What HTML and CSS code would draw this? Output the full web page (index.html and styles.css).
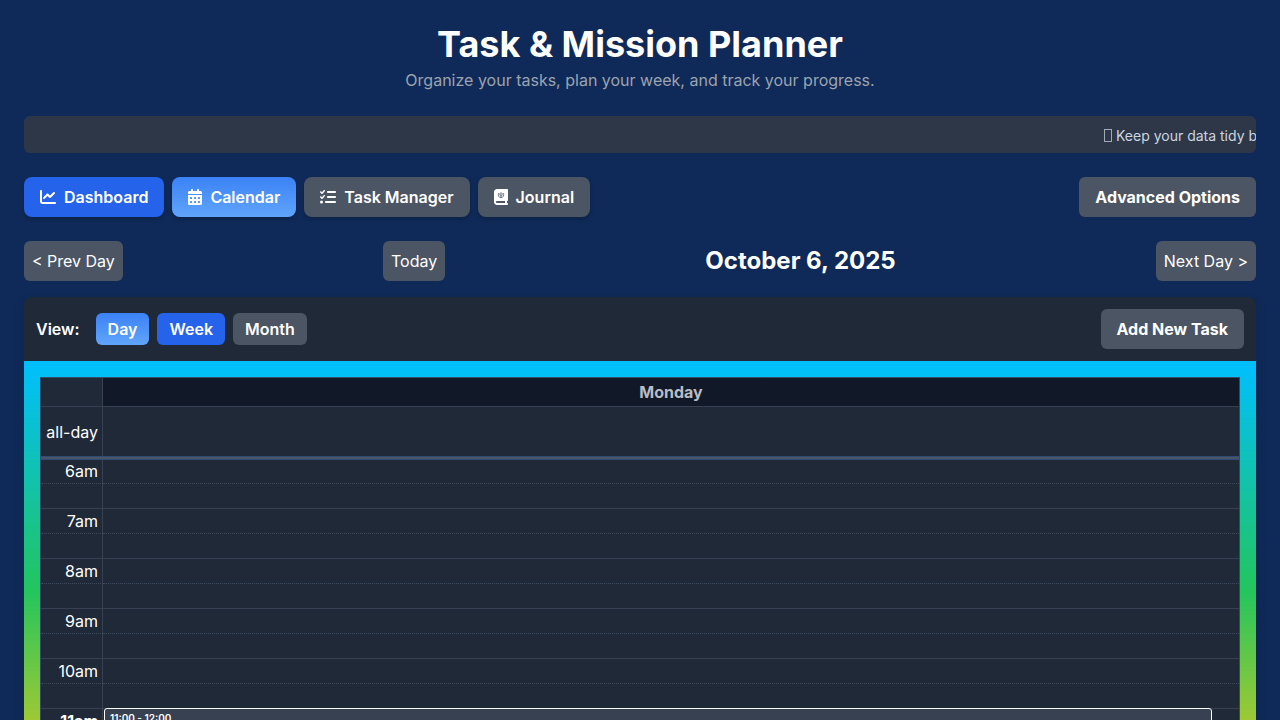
FILE: index.html
```html
<!DOCTYPE html>
<html lang="en">
<head>
<meta charset="utf-8">
<meta name="viewport" content="width=device-width, initial-scale=1">
<title>Task &amp; Mission Planner</title>
<link rel="stylesheet" href="styles.css">
</head>
<body>
<header class="page-header">
  <h1>Task &amp; Mission Planner</h1>
  <p>Organize your tasks, plan your week, and track your progress.</p>
</header>

<div class="ticker"><span class="ticker-text"><span class="ticker-glyph"></span>Keep your data tidy by archiving completed tasks.</span></div>

<nav class="tabs">
  <button type="button" class="tab tab-blue">
    <svg class="icon" viewBox="0 0 512 512" aria-hidden="true"><path d="M64 64c0-17.700-14.300-32-32-32S0 46.300 0 64V400c0 44.200 35.800 80 80 80H480c17.700 0 32-14.300 32-32s-14.300-32-32-32H80c-8.800 0-16-7.200-16-16V64zm406.600 86.600c12.500-12.500 12.500-32.800 0-45.300s-32.800-12.500-45.300 0L320 210.700l-57.400-57.400c-12.500-12.500-32.800-12.500-45.300 0l-112 112c-12.500 12.500-12.500 32.800 0 45.300s32.800 12.500 45.300 0L240 221.300l57.400 57.400c12.500 12.500 32.800 12.500 45.300 0l128-128z"/></svg>
    Dashboard</button>
  <button type="button" class="tab tab-active">
    <svg class="icon icon-narrow" viewBox="0 0 448 512" aria-hidden="true"><path fill-rule="evenodd" d="M128 0c17.700 0 32 14.300 32 32V64H288V32c0-17.700 14.300-32 32-32s32 14.300 32 32V64h48c26.500 0 48 21.500 48 48v48H0V112C0 85.500 21.500 64 48 64H96V32c0-17.700 14.300-32 32-32zM0 192H448V464c0 26.500-21.500 48-48 48H48c-26.500 0-48-21.500-48-48V192zM80 256a16 16 0 0 0-16 16v32a16 16 0 0 0 16 16h32a16 16 0 0 0 16-16v-32a16 16 0 0 0-16-16zM208 256a16 16 0 0 0-16 16v32a16 16 0 0 0 16 16h32a16 16 0 0 0 16-16v-32a16 16 0 0 0-16-16zM336 256a16 16 0 0 0-16 16v32a16 16 0 0 0 16 16h32a16 16 0 0 0 16-16v-32a16 16 0 0 0-16-16zM80 384a16 16 0 0 0-16 16v32a16 16 0 0 0 16 16h32a16 16 0 0 0 16-16v-32a16 16 0 0 0-16-16zM208 384a16 16 0 0 0-16 16v32a16 16 0 0 0 16 16h32a16 16 0 0 0 16-16v-32a16 16 0 0 0-16-16zM336 384a16 16 0 0 0-16 16v32a16 16 0 0 0 16 16h32a16 16 0 0 0 16-16v-32a16 16 0 0 0-16-16z"/></svg>
    Calendar</button>
  <button type="button" class="tab">
    <svg class="icon" viewBox="0 0 512 512" aria-hidden="true"><path d="M152.100 38.200c9.900 8.900 10.700 24 1.800 33.900l-72 80c-4.400 4.900-10.600 7.800-17.200 7.900s-12.900-2.400-17.600-7L7 113C-2.300 103.600-2.300 88.400 7 79s24.600-9.400 33.900 0l22.100 22.100 55.100-61.200c8.900-9.900 24-10.700 33.900-1.800zm0 160c9.900 8.900 10.700 24 1.800 33.900l-72 80c-4.400 4.900-10.600 7.800-17.200 7.900s-12.900-2.400-17.600-7L7 273c-9.300-9.400-9.300-24.600 0-34s24.600-9.400 33.900 0l22.100 22.100 55.100-61.200c8.900-9.900 24-10.700 33.900-1.800zM224 96c0-17.700 14.300-32 32-32H480c17.700 0 32 14.300 32 32s-14.300 32-32 32H256c-17.700 0-32-14.300-32-32zm0 160c0-17.700 14.300-32 32-32H480c17.700 0 32 14.300 32 32s-14.300 32-32 32H256c-17.700 0-32-14.300-32-32zM160 416c0-17.700 14.300-32 32-32H480c17.700 0 32 14.300 32 32s-14.300 32-32 32H192c-17.700 0-32-14.300-32-32zM48 368a48 48 0 1 1 0 96 48 48 0 1 1 0-96z"/></svg>
    Task Manager</button>
  <button type="button" class="tab">
    <svg class="icon icon-narrow" viewBox="0 0 448 512" aria-hidden="true"><path fill-rule="evenodd" d="M0 96C0 43 43 0 96 0H416c17.700 0 32 14.300 32 32V352c0 17.700-14.300 32-32 32v64c17.700 0 32 14.300 32 32s-14.300 32-32 32H96c-53 0-96-43-96-96V96zM64 416c0 17.700 14.300 32 32 32H352V384H96c-17.700 0-32 14.300-32 32z"/><path class="emblem" d="M146 128c-24 70 0 146 78 150 78-4 102-80 78-150M190 136c-14 40-4 76 24 88M258 136c14 40 4 76-24 88M224 100v178"/></svg>
    Journal</button>
  <button type="button" class="tab tab-end">Advanced Options</button>
</nav>

<div class="date-nav">
  <button type="button" class="nav-button">&lt; Prev Day</button>
  <button type="button" class="nav-button">Today</button>
  <h2>October 6, 2025</h2>
  <button type="button" class="nav-button">Next Day &gt;</button>
</div>

<main class="planner">
  <div class="toolbar">
    <span class="view-label">View:</span>
    <button type="button" class="view-button tab-active">Day</button>
    <button type="button" class="view-button tab-blue">Week</button>
    <button type="button" class="view-button">Month</button>
    <button type="button" class="tab tab-end">Add New Task</button>
  </div>
  <div class="frame">
    <table class="calendar">
      <thead>
        <tr class="day-row"><td class="axis"></td><th scope="col">Monday</th></tr>
        <tr class="all-day"><th class="axis" scope="row">all-day</th><td></td></tr>
        <tr class="divider"><td colspan="2"></td></tr>
      </thead>
      <tbody>
        <tr class="hour"><th class="axis" scope="row">6am</th><td></td></tr>
        <tr class="half"><td class="axis"></td><td></td></tr>
        <tr class="hour"><th class="axis" scope="row">7am</th><td></td></tr>
        <tr class="half"><td class="axis"></td><td></td></tr>
        <tr class="hour"><th class="axis" scope="row">8am</th><td></td></tr>
        <tr class="half"><td class="axis"></td><td></td></tr>
        <tr class="hour"><th class="axis" scope="row">9am</th><td></td></tr>
        <tr class="half"><td class="axis"></td><td></td></tr>
        <tr class="hour"><th class="axis" scope="row">10am</th><td></td></tr>
        <tr class="half"><td class="axis"></td><td></td></tr>
        <tr class="hour"><th class="axis axis-now" scope="row">11am</th><td class="slot"><div class="event">11:00 - 12:00</div></td></tr>
        <tr class="half"><td class="axis"></td><td></td></tr>
        <tr class="hour"><th class="axis" scope="row">12pm</th><td></td></tr>
        <tr class="half"><td class="axis"></td><td></td></tr>
        <tr class="hour"><th class="axis" scope="row">1pm</th><td></td></tr>
        <tr class="half"><td class="axis"></td><td></td></tr>
        <tr class="hour"><th class="axis" scope="row">2pm</th><td></td></tr>
        <tr class="half"><td class="axis"></td><td></td></tr>
        <tr class="hour"><th class="axis" scope="row">3pm</th><td></td></tr>
        <tr class="half"><td class="axis"></td><td></td></tr>
        <tr class="hour"><th class="axis" scope="row">4pm</th><td></td></tr>
        <tr class="half"><td class="axis"></td><td></td></tr>
        <tr class="hour"><th class="axis" scope="row">5pm</th><td></td></tr>
        <tr class="half"><td class="axis"></td><td></td></tr>
        <tr class="hour"><th class="axis" scope="row">6pm</th><td></td></tr>
        <tr class="half"><td class="axis"></td><td></td></tr>
        <tr class="hour"><th class="axis" scope="row">7pm</th><td></td></tr>
        <tr class="half"><td class="axis"></td><td></td></tr>
        <tr class="hour"><th class="axis" scope="row">8pm</th><td></td></tr>
        <tr class="half"><td class="axis"></td><td></td></tr>
        <tr class="hour"><th class="axis" scope="row">9pm</th><td></td></tr>
        <tr class="half"><td class="axis"></td><td></td></tr>
      </tbody>
    </table>
  </div>
</main>
</body>
</html>
```
FILE: styles.css
```css
*, *::before, *::after { box-sizing: border-box; }
html { scrollbar-width: none; }
body {
  margin: 0;
  padding: 24px;
  background: #0f2a58;
  color: #fff;
  font: 16px/24px Inter, "Liberation Sans", sans-serif;
}
h1, h2, p { margin: 0; }
button { font: inherit; color: #fff; border: 0; background: #4b5563; cursor: pointer; }

.page-header { text-align: center; margin-bottom: 24px; }
.page-header h1 { font-size: 36px; line-height: 40px; font-weight: 700; }
.page-header p { margin-top: 4px; color: #9ca3af; }

.ticker {
  overflow: hidden;
  white-space: nowrap;
  margin-bottom: 24px;
  padding: 9px 0 7px calc(100% - 152px);
  border-radius: 6px;
  background: #2d3748;
  color: #cbd5e0;
  font-size: 14px;
  line-height: 21px;
}
.ticker-text { display: flex; align-items: center; gap: 4px; }
.ticker-glyph { flex: none; width: 8px; height: 13px; border: 1px solid #a0aab8; }

.tabs { display: flex; gap: 8px; margin-bottom: 24px; }
.tab {
  display: flex;
  align-items: center;
  gap: 8px;
  padding: 8px 16px;
  border-radius: 8px;
  font-weight: 600;
  box-shadow: 0 2px 4px rgba(0, 0, 0, 0.2);
}
.tab-end { margin-left: auto; border-radius: 6px; font-weight: 700; box-shadow: none; }
.tab-blue { background: #2563eb; }
.tab-active { background: linear-gradient(#3b82f6, #60a5fa); }
.icon { width: 16px; height: 16px; fill: currentColor; }
.icon-narrow { width: 14px; }
.icon .emblem { fill: none; stroke: #4b5563; stroke-width: 24; }

.date-nav { display: flex; justify-content: space-between; align-items: center; margin-bottom: 16px; }
.date-nav h2 { font-size: 24px; line-height: 32px; font-weight: 700; }
.nav-button { padding: 8px; border-radius: 6px; }

.planner { border-radius: 8px; box-shadow: 0 4px 12px rgba(0, 0, 0, 0.1); }
.toolbar {
  display: flex;
  align-items: center;
  gap: 8px;
  padding: 12px;
  border-radius: 8px 8px 0 0;
  background: #1f2937;
}
.view-label { font-weight: 600; margin-right: 8px; }
.view-button { padding: 4px 12px; border-radius: 6px; font-weight: 600; }

.frame { padding: 16px; background: linear-gradient(#00bfff, #22c55e 25%, #facc15 50%, #f97316 75%, #ef4444); }
.calendar {
  width: 100%;
  table-layout: fixed;
  border-collapse: separate;
  border-spacing: 0;
  border: 1px solid #334a6b;
  background: #1f2937;
}
.calendar th, .calendar td { padding: 0; font-weight: 400; }
.calendar .axis { width: 62px; padding-right: 4px; border-right: 1px solid #374151; text-align: right; }
.day-row > * { height: 28px; }
.calendar .day-row th { background: #111827; color: #b8bcc4; font-weight: 700; }
.all-day > * { height: 50px; border-top: 1px solid #374151; }
.calendar .divider td { height: 4px; border: solid #2f4a78; border-width: 1px 0; background: #4b5563; }
.hour > *, .half > * { height: 25px; vertical-align: top; }
.hour > * { border-top: 1px solid #374151; }
.half > * { border-top: 1px dotted #3f4a5a; }
.calendar tbody tr:first-child > * { height: 23px; border-top: 0; line-height: 22px; }
.calendar .axis-now { font-weight: 700; }
.slot { position: relative; }
.event {
  position: absolute;
  inset: -1px 27px auto 1px;
  height: 50px;
  padding: 3px 5px;
  border: 1px solid #fff;
  border-radius: 3px;
  background: #374151;
  font-size: 10px;
  line-height: 13px;
  font-weight: 600;
}
```
